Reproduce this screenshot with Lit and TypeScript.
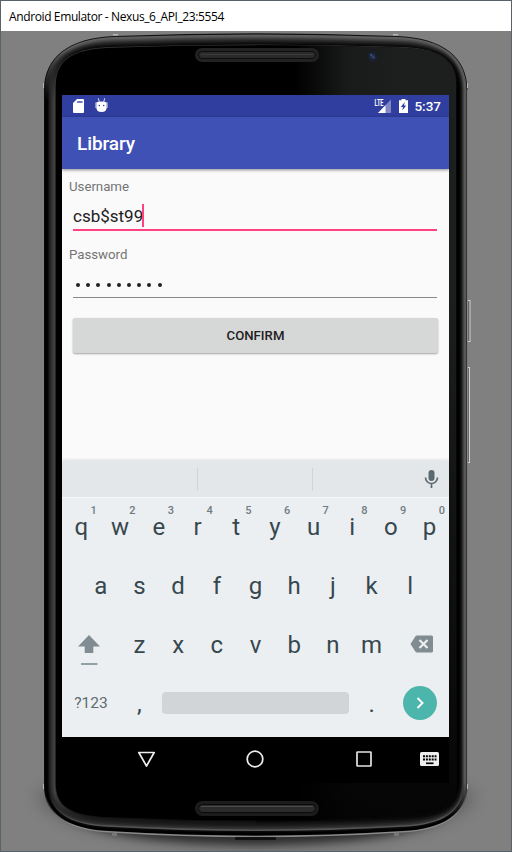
import { LitElement, html, css, svg } from "lit";
import { customElement } from "lit/decorators.js";

const mix = (a: number, b: number, t: number) => +(a + (b - a) * t).toFixed(2);

/* Outline of the handset; t = 0 is the outer rim, t = 1 the edge of the glass. */
function outline(t: number): string {
  const l = mix(44, 55, t);
  const r = mix(467.5, 457, t);
  const y1 = mix(90, 86, t);
  const yc = mix(58, 62, t);
  const cx = mix(24, 14, t);
  const ex = mix(71, 56, t);
  const ty = mix(36, 47, t);
  const top = mix(30.5, 42, t);
  const y2 = mix(786, 784, t);
  const yd = mix(815, 806, t);
  const by = mix(832.5, 818, t);
  const bot = mix(842, 825, t);
  return `M${l} ${y1}C${l} ${yc} ${l + cx} ${ty + 1.5} ${l + ex} ${ty}Q256 ${top} ${r - ex} ${ty}
    C${r - cx} ${ty + 1.5} ${r} ${yc} ${r} ${y1}V${y2}C${r} ${yd} ${r - cx} ${by - 2} ${r - ex + 6} ${by}
    Q256 ${bot} ${l + ex - 6} ${by}C${l + cx} ${by - 2} ${l} ${yd} ${l} ${y2}Z`;
}

const TOP = ["#111", "#606060", "#5a5a5a", "#4c4c4c", "#3e3e3e", "#303030", "#242424", "#1a1a1a", "#101010", "#080808", "#3a3a3a"];
const LEFT = ["#0a0a0a", "#000", "#000", "#060606", "#161616", "#222", "#2b2b2b", "#343434", "#3c3c3c", "#414141", "#303030"];
const RIGHT = ["#1a1a1a", "#555", "#5c5c5c", "#4a4a4a", "#333", "#1e1e1e", "#0c0c0c", "#050505", "#000", "#000", "#000"];
const BOTL = ["#8a8a8a", "#000", "#000", "#0a0a0a", "#555", "#333", "#262626", "#1c1c1c", "#141414", "#0c0c0c", "#060606"];

const layers = TOP.map((_, i) => i);

@customElement("phone-body")
class PhoneBody extends LitElement {
  static styles = css`
    :host { display: block; }
    svg { display: block; }
  `;
  render() {
    return html`<svg width="512" height="852" viewBox="0 0 512 852">
      <defs>
        <filter id="soft" x="-20%" y="-60%" width="140%" height="220%"><feGaussianBlur stdDeviation="9" /></filter>
        <filter id="near" x="-20%" y="-60%" width="140%" height="220%"><feGaussianBlur stdDeviation="4" /></filter>
        <clipPath id="lh"><rect x="0" y="0" width="256" height="852" /></clipPath>
        <clipPath id="rh"><rect x="256" y="0" width="256" height="852" /></clipPath>
        <linearGradient id="glow" gradientUnits="userSpaceOnUse" x1="295" y1="0" x2="400" y2="0">
          <stop offset="0" stop-color="#000" /><stop offset=".5" stop-color="#191a1a" /><stop offset="1" stop-color="#1d1f1e" />
        </linearGradient>
        <linearGradient id="fade" x1="0" y1="0" x2="0" y2="1">
          <stop offset=".3" stop-color="#000" stop-opacity="0" /><stop offset="1" stop-color="#000" stop-opacity=".85" />
        </linearGradient>
        <radialGradient id="lens"><stop offset="0" stop-color="#2c4068" /><stop offset=".5" stop-color="#1a2236" /><stop offset="1" stop-color="#1a1c1e" /></radialGradient>
        ${layers.map(
          (i) => svg`
          <linearGradient id=${"a" + i} gradientUnits="userSpaceOnUse" x1="0" y1="32" x2="0" y2="838">
            <stop offset=".02" stop-color=${TOP[i]} /><stop offset=".085" stop-color=${LEFT[i]} />
            <stop offset=".945" stop-color=${LEFT[i]} /><stop offset=".985" stop-color=${BOTL[i]} />
          </linearGradient>
          <linearGradient id=${"b" + i} gradientUnits="userSpaceOnUse" x1="0" y1="32" x2="0" y2="838">
            <stop offset=".02" stop-color=${TOP[i]} /><stop offset=".07" stop-color=${RIGHT[i]} />
            <stop offset=".93" stop-color=${RIGHT[i]} /><stop offset=".975" stop-color=${BOTL[i]} />
          </linearGradient>`
        )}
      </defs>
      <path d="M36 792Q60 842 256 844Q452 842 476 792Z" fill="#000" opacity=".32" filter="url(#soft)" />
      <path d="M66 812Q90 842 256 845Q422 842 446 812Z" fill="#000" opacity=".55" filter="url(#near)" />
      <g fill="#686868" stroke="#d0d0d0" stroke-width="1">
        <rect x="467.500" y="300.500" width="2.500" height="41" /><rect x="467.500" y="367.500" width="2" height="95" />
      </g>
      ${layers.map((i) => svg`<path d=${outline(i / 10)} fill=${`url(#a${i})`} clip-path="url(#lh)" />`)}
      ${layers.map((i) => svg`<path d=${outline(i / 10)} fill=${`url(#b${i})`} clip-path="url(#rh)" />`)}
      <path d=${outline(1.07)} fill="#000" />
      <path d=${outline(1.07)} fill="url(#glow)" clip-path="url(#rh)" />
      <path d=${outline(1.07)} fill="url(#fade)" clip-path="url(#rh)" />
      <path d="M467.500 90V786" stroke="#9a9a9a" stroke-width="1" opacity=".6" />
      <g fill="#b5b5b5">
        <rect x="113" y="34" width="5" height="1.500" /><rect x="393" y="34" width="5" height="1.500" />
        <rect x="43" y="83" width="1" height="5" /><rect x="467" y="83" width="1" height="5" />
        <rect x="43" y="784" width="1" height="5" /><rect x="467" y="784" width="1" height="5" />
      </g>
      <g fill="#777"><rect x="112" y="833" width="5" height="3" /><rect x="394" y="833" width="5" height="3" /></g>
      <rect x="235" y="837" width="41" height="3" rx="1" fill="#111" />
      <rect x="195" y="48" width="124" height="14" rx="7" fill="#222" />
      <rect x="198.500" y="51.500" width="117" height="7" rx="3.500" fill="#2a2a2a" stroke="#0c0c0c" />
      <path d="M201 54.500H313" stroke="#3c3c3c" />
      <rect x="195" y="801" width="124" height="15" rx="7.500" fill="#1c1c1c" />
      <rect x="198.500" y="804.500" width="117" height="8" rx="4" fill="#2b2b2b" stroke="#0a0a0a" />
      <path d="M201 806.500H313" stroke="#4a4a4a" />
      <circle cx="372.500" cy="56.500" r="6" fill="url(#lens)" />
      <circle cx="371" cy="54.800" r="1" fill="#3f5a8c" /><circle cx="374" cy="57.500" r="1" fill="#3a4a78" />
    </svg>`;
  }
}

@customElement("soft-keyboard")
class SoftKeyboard extends LitElement {
  static styles = css`
    :host { display: block; height: 276px; font-family: Roboto, sans-serif; background: #eceff1; color: #37474f; box-shadow: 0 -1px 3px rgba(0, 0, 0, 0.12); }
    .strip { height: 36px; background: #e3e7ea; border-bottom: 1px solid #f7f9fa; display: grid; grid-template-columns: 136px 115px 1fr; align-items: center; }
    .slot { height: 23px; border-right: 1px solid #cfd4d7; }
    .mic { justify-self: end; margin-right: 8px; margin-top: -1px; }
    svg { display: block; }
    .row { display: flex; height: 59px; justify-content: center; }
    .key { width: 38.7px; position: relative; text-align: center; font-size: 24px; line-height: 59px; }
    .hint { position: absolute; right: 4px; top: 5px; font-size: 11px; line-height: 15px; font-weight: 500; color: #6f7c82; }
    .wide { width: 58.05px; display: flex; align-items: center; justify-content: center; }
    .shift { justify-content: flex-start; padding: 8px 0 0 15px; box-sizing: border-box; }
    .del { justify-content: flex-end; padding: 0 15px 3px 0; box-sizing: border-box; }
    .sym { font-size: 15.500px; color: #5c6b72; padding-bottom: 3px; box-sizing: border-box; }
    .space { width: 187px; height: 22px; border-radius: 4px; background: #d1d5d8; margin: 17px 3.250px 0; }
    .go { width: 34px; height: 34px; border-radius: 50%; background: #4db6ac; display: grid; place-items: center; margin-top: -4px; }
    .low { line-height: 58px; }
  `;
  private letters(s: string, hints = false) {
    return [...s].map(
      (c, i) => html`<div class="key">${c}${hints ? html`<span class="hint">${(i + 1) % 10}</span>` : ""}</div>`
    );
  }
  render() {
    return html`
      <div class="strip">
        <div class="slot"></div><div class="slot"></div>
        <svg class="mic" width="19" height="22" viewBox="0 0 19 22">
          <rect x="6.500" y="2" width="6" height="11" rx="3" fill="#5b6a71" />
          <path d="M3.500 9.500a6 6 0 0 0 12 0M9.500 15.500V20" fill="none" stroke="#5b6a71" stroke-width="1.700" />
        </svg>
      </div>
      <div class="row">${this.letters("qwertyuiop", true)}</div>
      <div class="row">${this.letters("asdfghjkl")}</div>
      <div class="row">
        <div class="wide shift">
          <svg width="24" height="32" viewBox="0 0 24 32">
            <path d="M12 1L23 12.500H16.300V19H7.700V12.500H1Z" fill="#808c91" /><path d="M4 30H20.500" stroke="#93a0a6" stroke-width="2" />
          </svg>
        </div>
        ${this.letters("zxcvbnm")}
        <div class="wide del">
          <svg width="24" height="18" viewBox="0 0 24 18">
            <path d="M7 .5H21.500Q23 .5 23 2V16Q23 17.500 21.500 17.500H7Q6 17.500 5.300 16.500L.5 9L5.300 1.500Q6 .5 7 .5Z" fill="#808c91" />
            <path d="M9.500 5L17.500 13M17.500 5L9.500 13" stroke="#eceff1" stroke-width="2.200" />
          </svg>
        </div>
      </div>
      <div class="row">
        <div class="wide sym">?123</div>
        <div class="key low">,</div>
        <div class="space"></div>
        <div class="key low">.</div>
        <div class="wide">
          <div class="go">
            <svg width="10" height="12" viewBox="0 0 10 12"><path d="M2.500 1L7.500 6L2.500 11" fill="none" stroke="#fff" stroke-width="1.900" /></svg>
          </div>
        </div>
      </div>
    `;
  }
}

@customElement("app-root")
class AppRoot extends LitElement {
  static styles = css`
    :host { display: block; width: 512px; height: 852px; box-sizing: border-box; font-family: Roboto, sans-serif; }
    .window { position: relative; width: 512px; height: 852px; box-sizing: border-box; border: 1px solid #596269; background: #808080; overflow: hidden; }
    .title { position: relative; height: 30px; background: #fff; color: #000; font: 12px/31px "Open Sans", "Noto Sans", sans-serif; padding-left: 8px; white-space: nowrap; letter-spacing: -0.38px; }
    phone-body { position: absolute; left: -1px; top: -1px; }
    .screen { position: relative; margin: 64px 0 0 61px; width: 387px; height: 688px; display: flex; flex-direction: column; background: #fafafa; }
    .status { height: 22px; background: #303f9f; display: flex; align-items: center; color: #fff; padding: 0 8px 0 11px; }
    .status svg { display: block; }
    .bug { margin: -2px 0 0 10.500px; }
    .gap { flex: 1; }
    .bat { margin: 0 6px 0 7px; }
    .clock { font-size: 13.500px; font-weight: 500; line-height: 22px; }
    .bar { height: 52px; background: #3f51b5; color: #fff; font-size: 19px; font-weight: 500; line-height: 54px; padding-left: 15px; box-shadow: 0 1px 3px rgba(0, 0, 0, 0.45); letter-spacing: -0.1px; }
    .form { flex: 1; display: flex; flex-direction: column; padding: 8px 12px 0 11px; }
    .label { color: #757575; font-size: 13.300px; line-height: 20px; margin-left: -4px; letter-spacing: -0.05px; }
    .field { display: flex; align-items: center; box-sizing: border-box; height: 34px; border-bottom: 2px solid #ff4081; font-size: 17px; color: #212121; padding-top: 6px; }
    .caret { width: 2px; height: 23px; background: #ff4081; margin: -2px 0 0 -1px; }
    .pass { height: 33px; border-bottom: 1px solid #888; gap: 6.200px; padding: 7px 0 0 3px; }
    .second { margin-top: 14px; }
    .dot { width: 4px; height: 4px; border-radius: 50%; background: #212121; }
    .btn { margin: 20px -1px 0 0; height: 35px; background: #d6d7d7; border-radius: 2px; text-align: center; font-size: 13.200px; font-weight: 500; line-height: 36px; color: #212121; box-shadow: 0 1px 2px rgba(0, 0, 0, 0.35); }
    .nav { height: 46px; background: #000; display: grid; grid-template-columns: 29.500px 109px 109px 109px 30px; align-items: center; justify-items: center; }
    .nav svg { display: block; margin-top: -2px; }
    .nav .tri { margin-top: -1px; }
    .nav .kb { margin: -2px 0 0 -8px; }
  `;
  render() {
    return html`
      <div class="window">
        <phone-body></phone-body>
        <div class="title">Android Emulator - Nexus_6_API_23:5554</div>
        <div class="screen">
          <div class="status">
            <svg width="11" height="14" viewBox="0 0 11 14">
              <path d="M4 0H10Q11 0 11 1V13Q11 14 10 14H1Q0 14 0 13V4Z" fill="#fff" /><path d="M4.200 3H9.500" stroke="#5f6bb5" stroke-width="1.800" />
            </svg>
            <svg class="bug" width="13" height="15" viewBox="0 0 13 15">
              <path d="M3.300 .3L4.300 4M9.700 .3L8.700 4" stroke="#dfe2f3" stroke-width="1" />
              <path d="M1.500 4.200Q6.500 2.800 11.500 4.200V10.500Q11 14 6.500 14Q2 14 1.500 10.500Z" fill="#fff" /><path d="M1 4.500V10M12 4.500V10" stroke="#e8eaf6" />
              <circle cx="4.300" cy="7.500" r=".8" fill="#303f9f" /><circle cx="8.700" cy="7.500" r=".8" fill="#303f9f" />
            </svg>
            <div class="gap"></div>
            <svg width="18" height="14" viewBox="0 0 18 14">
              <path d="M4 14L17 .5V14Z" fill="#8089c4" /><path d="M4 14L11.500 6.200V14Z" fill="#fff" />
              <text x="0.500" y="6.500" font-size="8.500" font-weight="700" font-family="Roboto" fill="#fff" textLength="9" lengthAdjust="spacingAndGlyphs">LTE</text>
            </svg>
            <svg class="bat" width="9" height="14" viewBox="0 0 9 14">
              <path d="M2.500 0H6.500V1.200H9V14H0V1.200H2.500Z" fill="#fff" /><path d="M5.800 3L1.800 8H4L3.300 11.500L7.200 6.600H5Z" fill="#303f9f" />
            </svg>
            <div class="clock">5:37</div>
          </div>
          <div class="bar">Library</div>
          <div class="form">
            <div class="label">Username</div>
            <div class="field">csb$st99<span class="caret"></span></div>
            <div class="label second">Password</div>
            <div class="field pass">${Array.from({ length: 9 }, () => html`<span class="dot"></span>`)}</div>
            <div class="btn">CONFIRM</div>
          </div>
          <soft-keyboard></soft-keyboard>
          <div class="nav">
            <span></span>
            <svg class="tri" width="19" height="17" viewBox="0 0 19 17"><path d="M1.800 1.500H17.200L9.500 15Z" fill="none" stroke="#eee" stroke-width="1.700" stroke-linejoin="round" /></svg>
            <svg width="18" height="18" viewBox="0 0 18 18"><circle cx="9" cy="9" r="7.800" fill="none" stroke="#eee" stroke-width="1.700" /></svg>
            <svg width="16" height="16" viewBox="0 0 16 16"><rect x="1" y="1" width="14" height="14" rx=".5" fill="none" stroke="#e4e4e4" stroke-width="1.700" /></svg>
            <svg class="kb" width="19" height="14" viewBox="0 0 19 14">
              <rect width="19" height="14" rx="1.500" fill="#eee" />
              <path d="M3 4.300H16.500M3 7.500H16.500" stroke="#000" stroke-width="2" stroke-dasharray="2 .9" /><path d="M6 11.300H13.500" stroke="#000" stroke-width="1.700" />
            </svg>
          </div>
        </div>
      </div>
    `;
  }
}
